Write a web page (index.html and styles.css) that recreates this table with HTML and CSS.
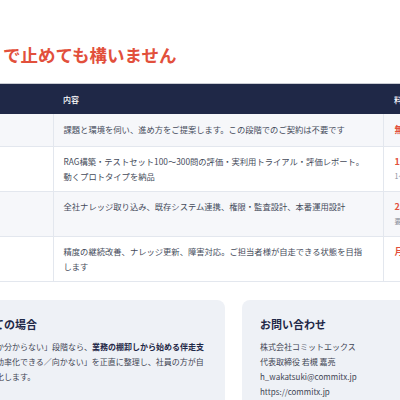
FILE: index.html
```html
<!DOCTYPE html>
<html lang="ja">
<head>
  <meta charset="UTF-8" />
  <meta name="viewport" content="width=device-width, initial-scale=1.0"/>
  <title>料金とプラン</title>
  <link rel="stylesheet" href="styles.css">
</head>
<body>
  <!-- 見出し -->
  <h2 class="lead">で止めても構いません</h2>

  <!-- 料金表 -->
  <div class="plan-wrap">
    <table class="plan">
      <colgroup>
        <col class="col-step">
        <col class="col-desc">
        <col class="col-price">
      </colgroup>
      <tr>
        <th class="step"></th>
        <th class="desc">内容</th>
        <th class="price">料金</th>
      </tr>
      <tr class="alt first">
        <td class="step"></td>
        <td class="desc">課題と環境を伺い、進め方をご提案します。この段階でのご契約は不要です</td>
        <td class="price"><span class="amount">無料</span></td>
      </tr>
      <tr>
        <td class="step"></td>
        <td class="desc">RAG構築・テストセット100〜300問の評価・実利用トライアル・評価レポート。動くプロトタイプを納品</td>
        <td class="price"><span class="amount">120万円〜</span><span class="note">1〜2か月</span></td>
      </tr>
      <tr class="alt">
        <td class="step"></td>
        <td class="desc">全社ナレッジ取り込み、既存システム連携、権限・監査設計、本番運用設計</td>
        <td class="price"><span class="amount">250万円〜</span><span class="note">要件により変動</span></td>
      </tr>
      <tr>
        <td class="step"></td>
        <td class="desc">精度の継続改善、ナレッジ更新、障害対応。ご担当者様が自走できる状態を目指します</td>
        <td class="price"><span class="amount">月額</span></td>
      </tr>
    </table>
  </div>

  <!-- 下段カード -->
  <div class="cards">
    <div class="card">
      <h3 class="cut">初めての場合</h3>
      <p>何か分からない」段階なら、<b>業務の棚卸しから始める伴走支</b><br>援効率化できる／向かない」を正直に整理し、社員の方が自<br>走化します。</p>
    </div>
    <div class="card">
      <h3>お問い合わせ</h3>
      <p>株式会社コミットエックス<br>代表取締役 若槻 嘉亮<br>h_wakatsuki@commitx.jp<br>https://commitx.jp</p>
    </div>
  </div>
</body>
</html>
```

FILE: styles.css
```css
html, body {
  overflow: hidden;
}
body {
  margin: 0;
  background-color: #fff;
  font-family: "Noto Sans CJK JP", "Noto Sans", sans-serif;
  color: #454b5a;
}

.lead {
  margin: 43px 0 16px 3px;
  font-size: 17.5px;
  line-height: 24px;
  font-weight: bold;
  color: #e2503c;
  white-space: nowrap;
}

/* 料金表 */
.plan-wrap {
  width: 480px;
  border-top: 1px solid #c9ccd3;
}
.plan {
  width: 480px;
  table-layout: fixed;
  border-collapse: collapse;
  font-size: 8.3px;
  line-height: 15px;
}
.col-step {
  width: 53px;
}
.col-desc {
  width: 330px;
}
.plan th {
  background-color: #1f2847;
  color: #fff;
  font-size: 8px;
  font-weight: 500;
  text-align: left;
  height: 30px;
  padding: 0 10px;
}
.plan td {
  padding: 7px 10px;
  vertical-align: top;
  border-bottom: 1px solid #e3e7ee;
  border-left: 1px solid #e3e7ee;
  background-color: #fff;
}
.plan tr.first td {
  height: 17px;
  padding-top: 8px;
}
.plan tr.alt td {
  background-color: #f6f7fa;
}
.plan td.step {
  border-left: none;
}
.plan td.desc {
  padding-right: 16px;
}
.plan .price {
  padding-left: 11px;
}
.amount {
  display: block;
  color: #e2503c;
  font-weight: bold;
  font-size: 9px;
}
.note {
  display: block;
  color: #8a8f9a;
  font-size: 7px;
}

/* 下段カード */
.cards {
  display: grid;
  grid-template-columns: 255px 255px;
  gap: 17px;
  margin: 18px 0 0 -30px;
}
.card {
  background-color: #eef1f6;
  border-radius: 8px;
  padding: 16px 18px;
  min-height: 110px;
}
.card h3 {
  margin: 0 0 7px;
  font-size: 11px;
  line-height: 16px;
  font-weight: bold;
  color: #1f2847;
  white-space: nowrap;
}
.card h3.cut {
  margin-left: -17px;
}
.card p {
  margin: 0;
  font-size: 8px;
  line-height: 15px;
  color: #3f4554;
  white-space: nowrap;
}
.card b {
  color: #1f2847;
}
```
